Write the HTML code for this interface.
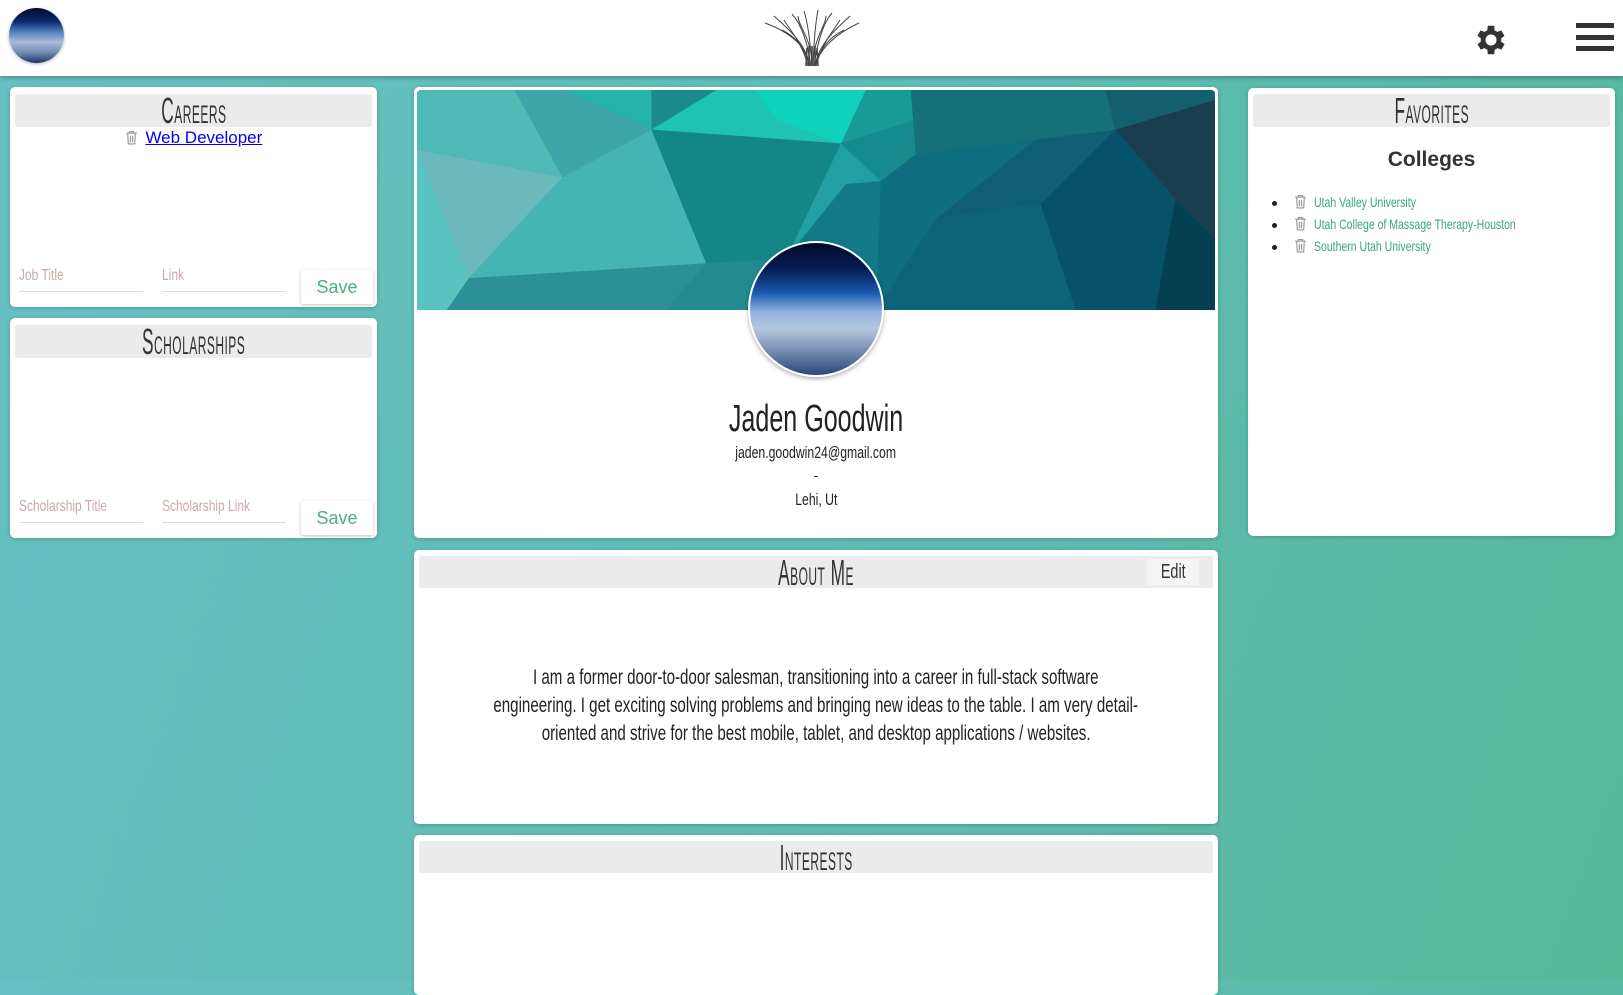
<!DOCTYPE html>
<html><head><meta charset="utf-8">
<style>
*{margin:0;padding:0;box-sizing:border-box}
body{width:1623px;height:979px;overflow:hidden;font-family:"Liberation Sans",sans-serif;background:linear-gradient(110deg,#67c0c3 0%,#5fbdb5 50%,#56b897 100%);position:relative}
.hdr{position:absolute;left:0;top:0;width:1623px;height:76px;background:#fff;box-shadow:0 2px 4px rgba(0,0,0,.25);z-index:2}
.card{position:absolute;background:#fff;border-radius:5px;box-shadow:0 1px 4px rgba(0,0,0,.2)}
.tb{position:absolute;background:#ebebeb;border-radius:3px;text-align:center;color:#333;overflow:hidden}
.c{display:inline-block;white-space:nowrap;transform-origin:center;margin:0 -600px}
.h{font-variant:small-caps;font-size:36px;line-height:34px;transform:scaleX(.48);letter-spacing:1px}
.inp{position:absolute;border-bottom:1px solid #ddd;color:#c9a9a9;font-size:16px}
.inp span{display:inline-block;transform:scaleX(.75);transform-origin:left}
.save{position:absolute;background:#fff;box-shadow:0 1px 3px rgba(0,0,0,.25);border-radius:2px;color:#4caf7d;font-size:18px;text-align:center;line-height:34px}
.lines div{text-align:center;height:28px;line-height:28px}
.lines .c{font-size:21px;transform:scaleX(.72);color:#222}
li{list-style:none;position:absolute;left:22px;font-size:14px;color:#3aa57c;white-space:nowrap}
li:before{content:"";position:absolute;left-22px;top:7px;width:5px;height:5px;border-radius:50%;background:#222}
li:before{left:-22px}
.tr{display:inline-block;vertical-align:-2px;margin-right:3px}
.l{display:inline-block;transform:scaleX(.75);transform-origin:left}
</style></head><body>
<div class="hdr">
  <div style="position:absolute;left:9px;top:8px;width:55px;height:55px;border-radius:50%;background:linear-gradient(180deg,#020a2a 0%,#0c2a70 25%,#5a86c4 45%,#a9bdd8 62%,#6f88b0 82%,#1c3466 100%);box-shadow:0 1px 3px rgba(0,0,0,.3)"></div>
  <svg style="position:absolute;left:762px;top:8px" width="100" height="60" viewBox="0 0 100 60">
    <g stroke="#444" stroke-width="1" fill="none">
      <path d="M47 58 C46 40 30 25 3 15"/><path d="M48 58 C44 35 25 20 12 8"/><path d="M49 58 C45 30 38 15 30 6"/><path d="M50 58 C48 30 45 12 42 3"/><path d="M51 58 C52 30 54 12 56 2"/><path d="M52 58 C56 30 62 14 70 5"/><path d="M53 58 C57 35 75 20 88 8"/><path d="M53 58 C58 40 75 25 97 15"/><path d="M47 58 C44 42 36 30 20 22"/><path d="M54 58 C57 42 66 30 82 22"/><path d="M46 58 C40 35 30 25 22 12"/><path d="M54 58 C60 35 70 25 78 12"/><path d="M50 58 C50 30 36 18 36 8"/><path d="M51 58 C51 30 64 18 64 8"/>
      <path d="M44 58 L45 40 M47 58 L47 38 M50 58 L50 38 M53 58 L53 38 M56 58 L55 40" stroke-width="1.6"/>
    </g>
  </svg>
  <svg style="position:absolute;left:1472px;top:21px" width="38" height="38" viewBox="0 0 24 24"><path fill="#333" d="M19.4 13a7.5 7.5 0 000-2l2.1-1.6-2-3.5-2.5 1a7 7 0 00-1.7-1L15 3h-4l-.4 2.9a7 7 0 00-1.7 1l-2.5-1-2 3.5L6.6 11a7.5 7.5 0 000 2l-2.1 1.6 2 3.5 2.5-1a7 7 0 001.7 1L11 21h4l.4-2.9a7 7 0 001.7-1l2.5 1 2-3.5zM13 15.5a3.5 3.5 0 110-7 3.5 3.5 0 010 7z" transform="translate(-1 0)"/></svg>
  <div style="position:absolute;left:1576px;top:23px;width:38px;height:5px;background:#333"></div>
  <div style="position:absolute;left:1576px;top:35px;width:38px;height:5px;background:#333"></div>
  <div style="position:absolute;left:1576px;top:46px;width:38px;height:5px;background:#333"></div>
</div>

<svg width="0" height="0" style="position:absolute"><defs><symbol id="tr" viewBox="0 0 12 14"><g fill="none" stroke="#999" stroke-width="1.1"><path d="M1 3h10M4 3V1.5h4V3M2.5 3.5l.5 9.5h6l.5-9.5M5 5.5v6M7 5.5v6"/></g></symbol></defs></svg>

<!-- Careers -->
<div class="card" style="left:10px;top:87px;width:367px;height:220px">
  <div class="tb" style="left:5px;top:7px;width:357px;height:33px"><span class="c h">Careers</span></div>
  <div style="position:absolute;left:0;top:41px;width:100%;text-align:center;font-size:17px">
    <svg class="tr" width="13" height="15"><use href="#tr"/></svg> <a style="color:#0000ee;text-decoration:underline">Web Developer</a></div>
  <div class="inp" style="left:9px;top:180px;width:124px;height:25px"><span>Job Title</span></div>
  <div class="inp" style="left:152px;top:180px;width:124px;height:25px"><span>Link</span></div>
  <div class="save" style="left:291px;top:183px;width:72px;height:34px">Save</div>
</div>

<!-- Scholarships -->
<div class="card" style="left:10px;top:318px;width:367px;height:220px">
  <div class="tb" style="left:5px;top:7px;width:357px;height:33px"><span class="c h">Scholarships</span></div>
  <div class="inp" style="left:9px;top:180px;width:124px;height:25px"><span>Scholarship Title</span></div>
  <div class="inp" style="left:152px;top:180px;width:124px;height:25px"><span>Scholarship Link</span></div>
  <div class="save" style="left:291px;top:183px;width:72px;height:34px">Save</div>
</div>

<!-- Profile -->
<div class="card" style="left:414px;top:87px;width:804px;height:451px">
  <svg style="position:absolute;left:3px;top:3px;border-radius:4px 4px 0 0" width="798" height="220" viewBox="0 0 800 222" preserveAspectRatio="none">
    <rect width="800" height="222" fill="#1a8a8e"/>
    <polygon points="0,0 98,0 146,88 0,60" fill="#4fb9b5"/>
    <polygon points="0,60 146,88 52,190 0,222" fill="#6ababc"/>
    <polygon points="0,60 0,222 30,222 52,190" fill="#58c3bf"/>
    <polygon points="98,0 235,0 235,40 146,88" fill="#3da6a8"/>
    <polygon points="146,88 235,40 290,175 52,190" fill="#44b5b4"/>
    <polygon points="52,190 290,175 250,222 30,222" fill="#2b9097"/>
    <polygon points="150,0 235,0 235,40" fill="#27b3ad"/>
    <polygon points="235,40 300,0 450,0 425,54" fill="#1ec3b3"/>
    <polygon points="340,0 450,0 425,54 360,30" fill="#0ed2bc"/>
    <polygon points="235,40 425,54 370,170 290,175" fill="#138688"/>
    <polygon points="425,54 465,92 430,95 370,170" fill="#229fa3"/>
    <polygon points="425,54 500,30 495,0 450,0" fill="#169b98"/>
    <polygon points="425,54 500,30 465,92" fill="#158a8f"/>
    <polygon points="290,175 370,170 330,222 250,222" fill="#238a91"/>
    <polygon points="370,170 430,95 465,92 460,222 330,222" fill="#117a86"/>
    <polygon points="495,0 690,0 700,40 500,65" fill="#16707a"/>
    <polygon points="465,92 500,65 620,50 520,130 460,222" fill="#0e6d7e"/>
    <polygon points="620,50 700,40 625,115 520,130" fill="#0f5f74"/>
    <polygon points="520,130 625,115 660,222 460,222" fill="#0d6479"/>
    <polygon points="625,115 700,40 760,110 740,222 660,222" fill="#06526a"/>
    <polygon points="690,0 800,0 800,10 700,40" fill="#135f70"/>
    <polygon points="700,40 800,10 800,150 760,110" fill="#183e50"/>
    <polygon points="760,110 800,150 800,222 740,222" fill="#043f52"/>
  </svg>
  <div style="position:absolute;left:334px;top:154px;width:136px;height:136px;border-radius:50%;border:2px solid #fff;box-shadow:0 2px 4px rgba(0,0,0,.3);background:linear-gradient(180deg,#020a2a 0%,#071c55 20%,#1a5bb0 38%,#8fb2de 52%,#b4c6dd 65%,#7d94b8 80%,#2b4678 100%)"></div>
  <div style="position:absolute;left:0;top:310px;width:100%;text-align:center;color:#222">
    <div style="height:44px;line-height:44px"><span class="c" style="font-size:38px;transform:scaleX(.66)">Jaden Goodwin</span></div>
    <div style="height:24px;line-height:24px"><span class="c" style="font-size:17px;transform:scaleX(.72)">jaden.goodwin24@gmail.com</span></div>
    <div style="height:24px;line-height:20px;font-size:14px">-</div>
    <div style="height:24px;line-height:22px"><span class="c" style="font-size:17px;transform:scaleX(.72)">Lehi, Ut</span></div>
  </div>
</div>

<!-- About -->
<div class="card" style="left:414px;top:550px;width:804px;height:274px">
  <div class="tb" style="left:5px;top:6px;width:794px;height:32px"><span class="c h">About Me</span>
    <div style="position:absolute;right:14px;top:3px;width:52px;height:26px;background:#f4f4f4;line-height:26px;font-size:20px"><span class="c" style="transform:scaleX(.72)">Edit</span></div>
  </div>
  <div class="lines" style="position:absolute;left:0;top:114px;width:100%">
    <div><span class="c">I am a former door-to-door salesman, transitioning into a career in full-stack software</span></div>
    <div><span class="c">engineering. I get exciting solving problems and bringing new ideas to the table. I am very detail-</span></div>
    <div><span class="c">oriented and strive for the best mobile, tablet, and desktop applications / websites.</span></div>
  </div>
</div>

<!-- Interests -->
<div class="card" style="left:414px;top:835px;width:804px;height:160px">
  <div class="tb" style="left:5px;top:6px;width:794px;height:32px"><span class="c h">Interests</span></div>
</div>

<!-- Favorites -->
<div class="card" style="left:1248px;top:88px;width:367px;height:448px">
  <div class="tb" style="left:5px;top:6px;width:357px;height:33px"><span class="c h">Favorites</span></div>
  <div style="position:absolute;left:0;top:60px;width:100%;text-align:center;font-size:21px;font-weight:bold;color:#333">Colleges</div>
  <ul style="position:absolute;left:24px;top:106px">
    <li style="top:0"><svg class="tr" width="13" height="15"><use href="#tr"/></svg> <span class="l">Utah Valley University</span></li>
    <li style="top:22px"><svg class="tr" width="13" height="15"><use href="#tr"/></svg> <span class="l">Utah College of Massage Therapy-Houston</span></li>
    <li style="top:44px"><svg class="tr" width="13" height="15"><use href="#tr"/></svg> <span class="l">Southern Utah University</span></li>
  </ul>
</div>
</body></html>
